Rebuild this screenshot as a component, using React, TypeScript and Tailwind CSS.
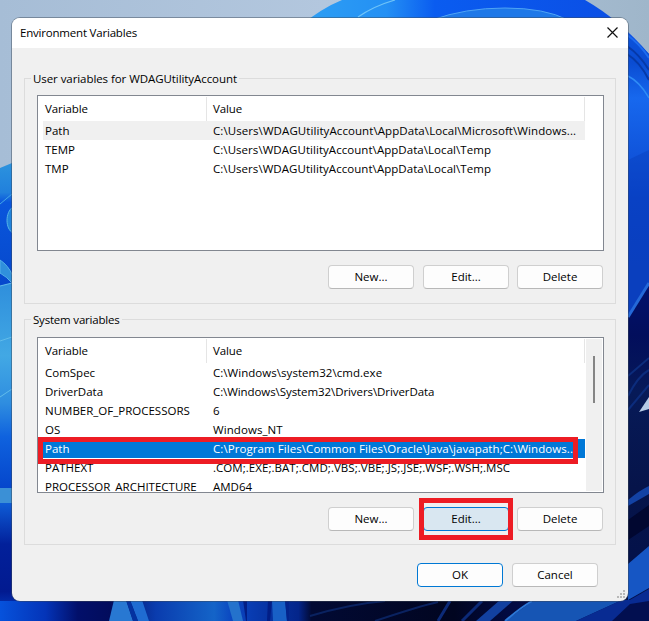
import type { ReactNode } from "react";

type Variable = { name: string; value: string; valueClass?: string };

const userVariables: Variable[] = [
  {
    name: "Path",
    value: "C:\\Users\\WDAGUtilityAccount\\AppData\\Local\\Microsoft\\Windows...",
    valueClass: "tracking-[0.08px]",
  },
  { name: "TEMP", value: "C:\\Users\\WDAGUtilityAccount\\AppData\\Local\\Temp", valueClass: "tracking-[0.05px]" },
  { name: "TMP", value: "C:\\Users\\WDAGUtilityAccount\\AppData\\Local\\Temp", valueClass: "tracking-[0.05px]" },
];

const systemVariables: Variable[] = [
  { name: "ComSpec", value: "C:\\Windows\\system32\\cmd.exe", valueClass: "tracking-[0.04px]" },
  { name: "DriverData", value: "C:\\Windows\\System32\\Drivers\\DriverData", valueClass: "tracking-[-0.08px]" },
  { name: "NUMBER_OF_PROCESSORS", value: "6" },
  { name: "OS", value: "Windows_NT", valueClass: "tracking-[0.08px]" },
  {
    name: "Path",
    value: "C:\\Program Files\\Common Files\\Oracle\\Java\\javapath;C:\\Windows...",
    valueClass: "tracking-[0.07px]",
  },
  {
    name: "PATHEXT",
    value: ".COM;.EXE;.BAT;.CMD;.VBS;.VBE;.JS;.JSE;.WSF;.WSH;.MSC",
    valueClass: "tracking-[0.04px]",
  },
  { name: "PROCESSOR_ARCHITECTURE", value: "AMD64" },
];

function Wallpaper() {
  return (
    <svg className="absolute inset-0" width="649" height="621" viewBox="0 0 649 621" fill="none">
      <defs>
        <linearGradient id="sky" x1="0" y1="0" x2="1" y2="0">
          <stop offset="0" stopColor="#a6bdd6" />
          <stop offset="0.5" stopColor="#b3c7de" />
          <stop offset="1" stopColor="#9fb6ca" />
        </linearGradient>
        <linearGradient id="petal" x1="315" y1="0" x2="600" y2="0" gradientUnits="userSpaceOnUse">
          <stop offset="0" stopColor="#2c9df4" />
          <stop offset="0.25" stopColor="#2490f4" />
          <stop offset="0.42" stopColor="#0a5cf0" />
          <stop offset="1" stopColor="#0b50e6" />
        </linearGradient>
        <linearGradient id="left-top" x1="0" y1="163" x2="0" y2="286" gradientUnits="userSpaceOnUse">
          <stop offset="0" stopColor="#2c93de" />
          <stop offset="0.24" stopColor="#2180dc" />
          <stop offset="0.32" stopColor="#0a56dc" />
          <stop offset="1" stopColor="#0648cc" />
        </linearGradient>
        <linearGradient id="left-mid" x1="0" y1="284" x2="0" y2="488" gradientUnits="userSpaceOnUse">
          <stop offset="0" stopColor="#2f8fdc" />
          <stop offset="0.35" stopColor="#42a8e4" />
          <stop offset="0.58" stopColor="#2f8ee0" />
          <stop offset="0.75" stopColor="#0f62de" />
          <stop offset="1" stopColor="#0546cc" />
        </linearGradient>
        <linearGradient id="left-low" x1="0" y1="503" x2="0" y2="621" gradientUnits="userSpaceOnUse">
          <stop offset="0" stopColor="#0e5cd6" />
          <stop offset="0.35" stopColor="#02209a" />
          <stop offset="0.75" stopColor="#021a90" />
          <stop offset="1" stopColor="#0548d0" />
        </linearGradient>
        <linearGradient id="right" x1="0" y1="20" x2="0" y2="621" gradientUnits="userSpaceOnUse">
          <stop offset="0" stopColor="#0b55e0" />
          <stop offset="0.07" stopColor="#0a4cd2" />
          <stop offset="0.13" stopColor="#1768ee" />
          <stop offset="0.3" stopColor="#0b45cc" />
          <stop offset="0.41" stopColor="#0d42c4" />
        </linearGradient>
        <linearGradient id="deep" x1="0" y1="240" x2="0" y2="621" gradientUnits="userSpaceOnUse">
          <stop offset="0" stopColor="#02157c" />
          <stop offset="0.25" stopColor="#020e5c" />
          <stop offset="0.4" stopColor="#071a58" />
          <stop offset="0.65" stopColor="#06144a" />
          <stop offset="1" stopColor="#02104a" />
        </linearGradient>
        <linearGradient id="floor" x1="0" y1="0" x2="649" y2="0" gradientUnits="userSpaceOnUse">
          <stop offset="0" stopColor="#0652dc" />
          <stop offset="0.07" stopColor="#0434b8" />
          <stop offset="0.12" stopColor="#020f6a" />
          <stop offset="0.17" stopColor="#020c5c" />
          <stop offset="0.24" stopColor="#0a3cae" />
          <stop offset="0.33" stopColor="#1464c8" />
          <stop offset="0.36" stopColor="#0a44c0" />
          <stop offset="0.46" stopColor="#04258a" />
          <stop offset="0.48" stopColor="#020a34" />
          <stop offset="0.7" stopColor="#010520" />
          <stop offset="0.78" stopColor="#020a40" />
          <stop offset="1" stopColor="#041a70" />
        </linearGradient>
      </defs>

      <rect width="649" height="621" fill="url(#sky)" />
      <path d="M300 26Q322 8 342 0H585Q620 20 649 54V260H300Z" fill="url(#petal)" />
      <path d="M358 17Q374 6 395 0" stroke="#6fc4f8" strokeWidth="1.2" />
      <path d="M432 20Q465 8 505 8T568 20Z" fill="#1e78e8" />
      <path d="M432 20Q465 8 505 8T568 20" stroke="#4fa4f4" />

      <path d="M600 17Q628 30 649 54V325H600Z" fill="url(#right)" />
      <path d="M627 46Q640 55 649 70M627 54Q640 62 649 80" stroke="#0639a8" strokeWidth="2" />
      <path d="M626 34Q640 44 649 58" stroke="#1d6cf0" strokeWidth="2" />
      <path d="M628 76Q640 82 649 98" stroke="#2f8cf6" strokeWidth="1.5" />
      <path d="M628 160V318L649 285V150Z" fill="#0638b4" opacity="0.35" />
      <path d="M610 317H628L649 283V621H610Z" fill="url(#deep)" />
      <path d="M628 317L649 283" stroke="#2468d8" strokeWidth="3" />
      <path d="M628 376L649 358M628 396Q638 376 649 370M628 410L649 385" stroke="#0c2c7c" strokeWidth="2" />
      <path d="M639 412L649 397V409Z" fill="#b4cae6" />
      <path d="M628 500Q640 490 649 486V494L628 506Z" fill="#1342a4" />
      <path d="M628 540L649 526V505L628 520Z" fill="#010730" />
      <path d="M628 564L649 546V588L628 600Z" fill="#1656c4" />
      <path d="M628 601L649 589V606L628 621Z" fill="#082a92" />

      <path d="M0 168L12 163H30V290H0Z" fill="url(#left-top)" />
      <path d="M0 204L12 194" stroke="#45a8e8" />
      <path d="M13 207C5 212 5 229 13 233Z" fill="#2184dc" stroke="#56b4e8" />
      <path d="M0 260Q8 265 13 276V284Q6 276 0 273Z" fill="#3090dc" stroke="#55b0e8" />
      <path d="M0 286L12 283H30V490H0Z" fill="url(#left-mid)" />
      <path d="M0 286L12 283M0 341L12 337M0 397L12 389" stroke="#62bcea" />
      <path d="M0 503H30V621H0Z" fill="url(#left-low)" />
      <path d="M0 488H12V503H0Z" fill="#3b90d6" />

      <path d="M0 601H649V621H0Z" fill="url(#floor)" />
      <path d="M114 600H126L133 621H109Z" fill="#2878d2" />
      <path d="M130 600H142L149 621H138Z" fill="#1f6cd2" />
      <path d="M126 600H130L138 621H133Z" fill="#0432a0" />
      <path d="M227 600H238L243 621H233Z" fill="#2472cc" />
      <path d="M243 600H247V621H246ZM268 600H272L270 621H267Z" fill="#021e86" />
      <path d="M272 600H285L287 621H273Z" fill="#1860c6" />
      <path d="M285 600H289V621H287Z" fill="#03238c" />
      <path d="M310 616Q350 604 385 601M375 621Q420 606 438 602" stroke="#0a2260" strokeWidth="2" />
      <path d="M438 621L450 601M462 621L482 601" stroke="#0c2a78" strokeWidth="3" />
      <path d="M476 621L500 600H514L490 621Z" fill="#1240a0" />
      <path d="M505 621L534 600H622L576 621Z" fill="#1655b4" />
      <path d="M505 621Q520 608 532 601" stroke="#2c78d8" strokeWidth="2" />
      <path d="M576 621L622 600H649V621Z" fill="#082b92" />
      <path d="M612 621L630 604L649 601V621Z" fill="#020f50" />
    </svg>
  );
}

const buttonStyles = {
  normal: "border-[#cfcfcf] border-b-[#b8b8b8] bg-[#fdfdfd]",
  primary: "border-[#0078d4] bg-[#fdfdfd]",
  hover: "border-[#0078d4] bg-[#d9e7f1]",
};

function Button({ children, kind = "normal" }: { children: ReactNode; kind?: keyof typeof buttonStyles }) {
  return (
    <button className={`flex h-6 w-[86px] items-center justify-center rounded-[4px] border ${buttonStyles[kind]}`}>
      {children}
    </button>
  );
}

type ListProps = { rows: Variable[]; selected: number; active?: boolean };

function VariableList({ rows, selected, active }: ListProps) {
  const highlight = active ? "bg-[#0078d7] text-white" : "bg-[#f0f0f0]";

  return (
    <div className="flex h-[156px] overflow-hidden border border-[#828790] bg-white p-px">
      <div className="w-[546px] shrink-0">
        <div className="flex h-6 leading-[23px]">
          <span className="w-[168px] border-r border-[#e5e5e5] pl-1.5 tracking-[-0.1px]">Variable</span>
          <span className="flex-1 border-r border-[#e5e5e5] pl-1.5 tracking-[-0.1px]">Value</span>
        </div>
        {rows.map((row, i) => (
          <div key={row.name} className={`ml-1 flex h-[19px] leading-5 ${i === selected ? highlight : ""}`}>
            <span className="w-[168px] pl-0.5">{row.name}</span>
            <span className={`pl-0.5 ${row.valueClass ?? ""}`}>{row.value}</span>
          </div>
        ))}
      </div>
      {active && (
        <div className="ml-px flex w-4 justify-center bg-[#f0f0f0] pt-[17px]">
          <div className="h-[47px] w-0.5 bg-[#858585]" />
        </div>
      )}
    </div>
  );
}

function Group({ title, children }: { title: ReactNode; children: ReactNode }) {
  return (
    <section className="h-[226px] border border-[#dcdcdc] pr-[11px] pl-3">
      <h2 className="-mt-[9px] -ml-1.5 leading-[18px]">
        <span className="inline-block bg-[#f0f0f0] px-0.5">{title}</span>
      </h2>
      {children}
    </section>
  );
}

function GroupButtons({ highlightEdit }: { highlightEdit?: boolean }) {
  return (
    <div className="mt-3.5 flex justify-end gap-2 pr-px">
      <div className="mr-px">
        <Button>New...</Button>
      </div>
      <div className="relative">
        <Button kind={highlightEdit ? "hover" : "normal"}>Edit...</Button>
        {highlightEdit && (
          <div className="absolute -top-[9px] -left-1 h-[42px] w-[94px] border-5 border-[#ed1c24]" />
        )}
      </div>
      <Button>Delete</Button>
    </div>
  );
}

export default function App() {
  return (
    <main className="relative h-[621px] w-[649px] overflow-hidden pt-[18px] pl-3 font-['Open_Sans','Noto_Sans',sans-serif] text-[11.5px] whitespace-nowrap text-black">
      <Wallpaper />

      <div className="relative h-[583px] w-[616px] rounded-lg bg-[#f0f0f0] shadow-[0_0_0_1px_rgba(60,70,85,0.45)]">
        <header className="flex h-[30px] items-center justify-between rounded-t-lg bg-white pr-2.5 pl-2">
          <span className="tracking-[-0.2px]">Environment Variables</span>
          <svg width="11" height="11" viewBox="0 0 11 11" stroke="#111" strokeWidth="1.2" className="-mt-0.5">
            <path d="M0.5 0.5L10.5 10.5M10.5 0.5L0.5 10.5" />
          </svg>
        </header>

        <div className="flex flex-col gap-[15px] px-3 pt-[30px]">
          <Group title={<span className="tracking-[-0.07px]">User variables for WDAGUtilityAccount</span>}>
            <div className="pt-[7px]">
              <VariableList rows={userVariables} selected={0} />
            </div>
            <GroupButtons />
          </Group>

          <Group title={<span className="tracking-[-0.2px]">System variables</span>}>
            <div className="relative mt-2">
              <VariableList rows={systemVariables} selected={4} active />
              <div className="absolute top-[100px] left-px h-[27px] w-[540px] border-5 border-[#ed1c24]" />
              <div className="absolute top-[121px] left-1.5 h-px w-[530px] bg-white" />
            </div>
            <GroupButtons highlightEdit />
          </Group>
        </div>

        <footer className="mt-[18px] flex justify-end gap-[9px] pr-[30px]">
          <Button kind="primary">OK</Button>
          <Button>Cancel</Button>
        </footer>

        <svg className="absolute right-0.5 bottom-0.5" width="9" height="9" viewBox="0 0 9 9" fill="#b8b8b8">
          <path d="M6 0h2v2H6zM3 3h2v2H3zM6 3h2v2H6zM0 6h2v2H0zM3 6h2v2H3zM6 6h2v2H6z" />
        </svg>
      </div>
    </main>
  );
}
